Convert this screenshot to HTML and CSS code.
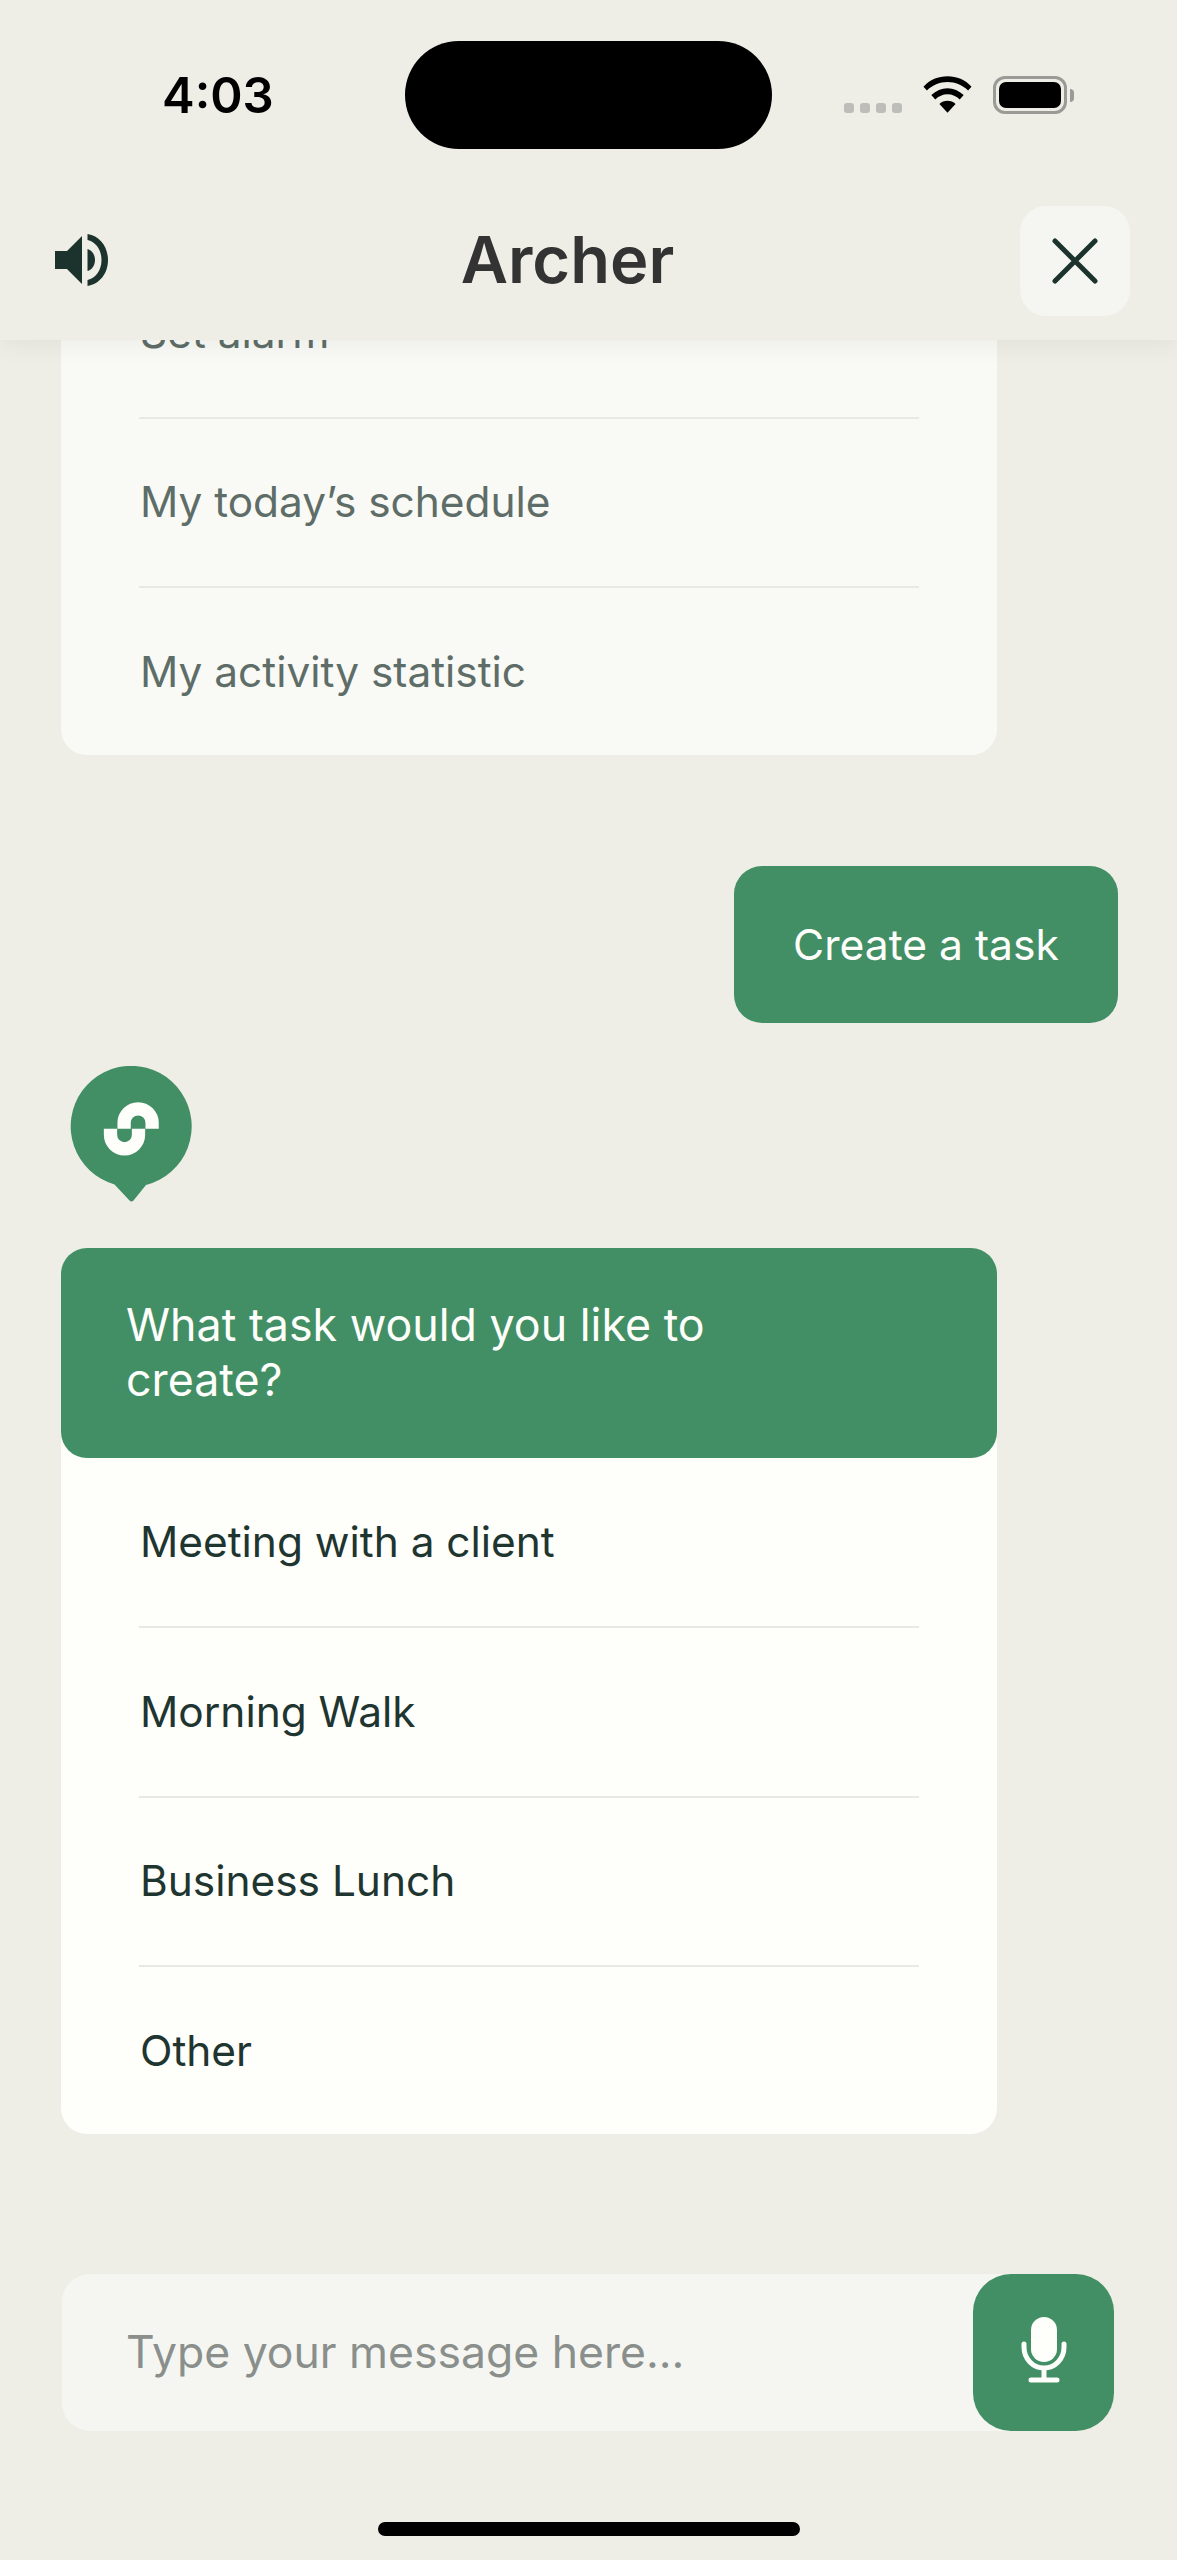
FILE: index.html
```html
<!DOCTYPE html>
<html lang="en">
<head>
<meta charset="utf-8">
<title>Archer</title>
<link rel="stylesheet" href="styles.css">
</head>
<body>
<div class="screen">
  <header class="top">
    <div class="status">
      <span class="clock">4:03</span>
      <div class="island"></div>
      <div class="sys">
        <div class="dots"><i></i><i></i><i></i><i></i></div>
        <svg class="wifi" width="49" height="37" viewBox="0 0 50 37"><path d="M25 0C15.500 0 7 3.600 .5 10.500L4 14.500C9.500 9 17 5.800 25 5.800S40.500 9 46 14.500L49.500 10.500C43 3.600 34.500 0 25 0Z"/><path d="M25 12C18.800 12 13.300 14.400 8.500 19L12.500 23.500C15.800 20.300 20.300 18.200 25 18.200S34.200 20.300 37.500 23.500L41.500 19C36.700 14.400 31.200 12 25 12Z"/><path d="M25 25C21.800 25 19 26.200 16.800 28.200L25 37L33.200 28.200C31 26.200 28.200 25 25 25Z"/></svg>
        <div class="batt"><div class="batt-shell"><div class="batt-fill"></div></div><div class="batt-cap"></div></div>
      </div>
    </div>
    <div class="nav">
      <svg class="speaker" width="53" height="52" viewBox="0 0 53 52"><path d="M0 17H12L27 2V50L12 35H0Z"/><path d="M32.500 0C45 2 53 13 53 26S45 50 32.500 52V46C41 44 46.500 36 46.500 26S41 8 32.500 6Z"/><path d="M32.500 15C37 16 40 21 40 26S37 36 32.500 37Z"/></svg>
      <h1 class="title">Archer</h1>
      <button class="close" type="button"><svg width="46" height="46" viewBox="0 0 46 46"><path d="M3 3L43 43M43 3L3 43"/></svg></button>
    </div>
  </header>

  <main class="chat">
    <section class="card card-old">
      <ul class="options">
        <li>Set alarm</li>
        <li>My today’s schedule</li>
        <li>My activity statistic</li>
      </ul>
    </section>

    <div class="bubble-row"><div class="bubble">Create a task</div></div>

    <svg class="avatar" width="122" height="136" viewBox="0 0 122 136">
      <path class="avatar-bg" d="M44.500 118.500A60.500 60.500 0 1 1 76 119L63.500 134.500Q61.500 136.500 59.500 134.500Z"/>
      <path class="avatar-s" d="M40.500 62.800V68.800A14 14 0 0 0 68.500 68.800V62.800"/>
      <path class="avatar-s" d="M54.100 62.800V56.800A14 14 0 0 1 82.100 56.800V62.800"/>
    </svg>

    <section class="card card-new">
      <div class="question">What task would you like to create?</div>
      <ul class="options">
        <li>Meeting with a client</li>
        <li>Morning Walk</li>
        <li>Business Lunch</li>
        <li>Other</li>
      </ul>
    </section>
  </main>

  <div class="composer">
    <div class="field">Type your message here...</div>
    <button class="mic" type="button">
      <svg width="46" height="66" viewBox="0 0 46 66"><rect x="10" y="0" width="26" height="45" rx="13"/><path class="mic-arc" d="M3 27V30C3 42 12 51 23 51S43 42 43 30V27M23 51V62M10 63H36"/></svg>
    </button>
  </div>
  <div class="home-bar"></div>
</div>
</body>
</html>
```
FILE: styles.css
```css
* { box-sizing: border-box; }
html, body { margin: 0; padding: 0; }
body { background: #eeeee7; font-family: Inter, "Liberation Sans", sans-serif; }
ul { list-style: none; margin: 0; padding: 0; }

.screen { width: 1177px; height: 2560px; display: flex; flex-direction: column; overflow: hidden; background: #eeeee7; position: relative; }

.top { height: 340px; flex: none; background: #eeeee7; position: relative; z-index: 2; box-shadow: 0 4px 24px rgba(60, 60, 50, .07); }
.status { height: 148px; position: relative; }
.clock { position: absolute; left: 162px; top: 70px; font-size: 49px; line-height: 52px; font-weight: 600; color: #000; }
.island { position: absolute; left: 405px; top: 41px; width: 367px; height: 108px; border-radius: 54px; background: #000; }
.sys { position: absolute; left: 844px; top: 76px; display: flex; align-items: flex-start; }
.dots { display: flex; gap: 6px; margin-top: 27px; }
.dots i { width: 10px; height: 10px; border-radius: 3px; background: #bdbdb9; }
.wifi { margin-left: 21px; }
.wifi path { fill: #000; }
.batt { display: flex; align-items: center; margin-left: 21px; }
.batt-shell { width: 74px; height: 38px; border: 3px solid #9a9a96; border-radius: 12px; padding: 3px; }
.batt-fill { width: 100%; height: 100%; border-radius: 7px; background: #000; }
.batt-cap { width: 4px; height: 13px; margin-left: 3px; border-radius: 0 6px 6px 0; background: #9a9a96; }

.nav { height: 192px; display: flex; align-items: flex-start; justify-content: space-between; position: relative; padding: 0 47px 0 55px; }
.speaker { margin-top: 86px; }
.speaker path { fill: #1c332d; }
.title { position: absolute; left: 0; right: 0; top: 74px; margin: 0; text-align: center; font-size: 65px; line-height: 76px; font-weight: 600; color: #333; transform: translateX(-21px); }
.close { width: 110px; height: 110px; margin-top: 58px; border: 0; padding: 0; border-radius: 26px; background: #f5f6f1; display: flex; align-items: center; justify-content: center; }
.close path { fill: none; stroke: #1c332d; stroke-width: 5px; stroke-linecap: round; }

.chat { height: 1794px; flex: none; overflow: hidden; display: flex; flex-direction: column; justify-content: flex-end; padding-left: 61px; }

.card { width: 936px; border-radius: 26px; flex: none; }
.card-old { background: #f9faf6; color: #5e6d67; }
.card-new { background: #fefefb; color: #1e3530; }
.options li { height: 169.5px; margin: 0 78px; padding-left: 1px; display: flex; align-items: center; font-size: 42.4px; line-height: 50px; border-top: 2px solid #e9e9e4; }
.options li:first-child { height: 168px; border-top: 0; }
.options li:last-child { height: 169px; }

.bubble-row { display: flex; justify-content: flex-end; padding-right: 59px; margin-top: 111px; flex: none; }
.bubble { width: 384px; height: 157px; border-radius: 28px; background: #428f65; color: #fefefb; font-size: 42.6px; line-height: 157px; text-align: center; }

.avatar { margin: 43px 0 46px 9px; flex: none; display: block; }
.avatar-bg { fill: #428f65; }
.avatar-s { fill: none; stroke: #fefefb; stroke-width: 13.3px; }

.question { height: 210px; padding: 50px 200px 0 65px; border-radius: 26px; background: #428f65; color: #fefefb; font-size: 44.75px; line-height: 55px; }

.composer { position: relative; margin: 140px 0 0 62px; width: 1052px; height: 157px; flex: none; }
.field { width: 1000px; height: 157px; background: #f5f6f1; border-radius: 28px; padding-left: 64px; font-size: 44.5px; line-height: 157px; color: #8a8f8c; }
.mic { position: absolute; right: 0; top: 0; width: 141px; height: 157px; border: 0; padding: 0 0 6px; border-radius: 38px; background: #428f65; display: flex; align-items: center; justify-content: center; }
.mic rect { fill: #fefefb; }
.mic-arc { fill: none; stroke: #fefefb; stroke-width: 5px; stroke-linecap: round; }

.home-bar { margin: 91px 0 0 378px; width: 422px; height: 14px; border-radius: 7px; background: #000; flex: none; }
```
